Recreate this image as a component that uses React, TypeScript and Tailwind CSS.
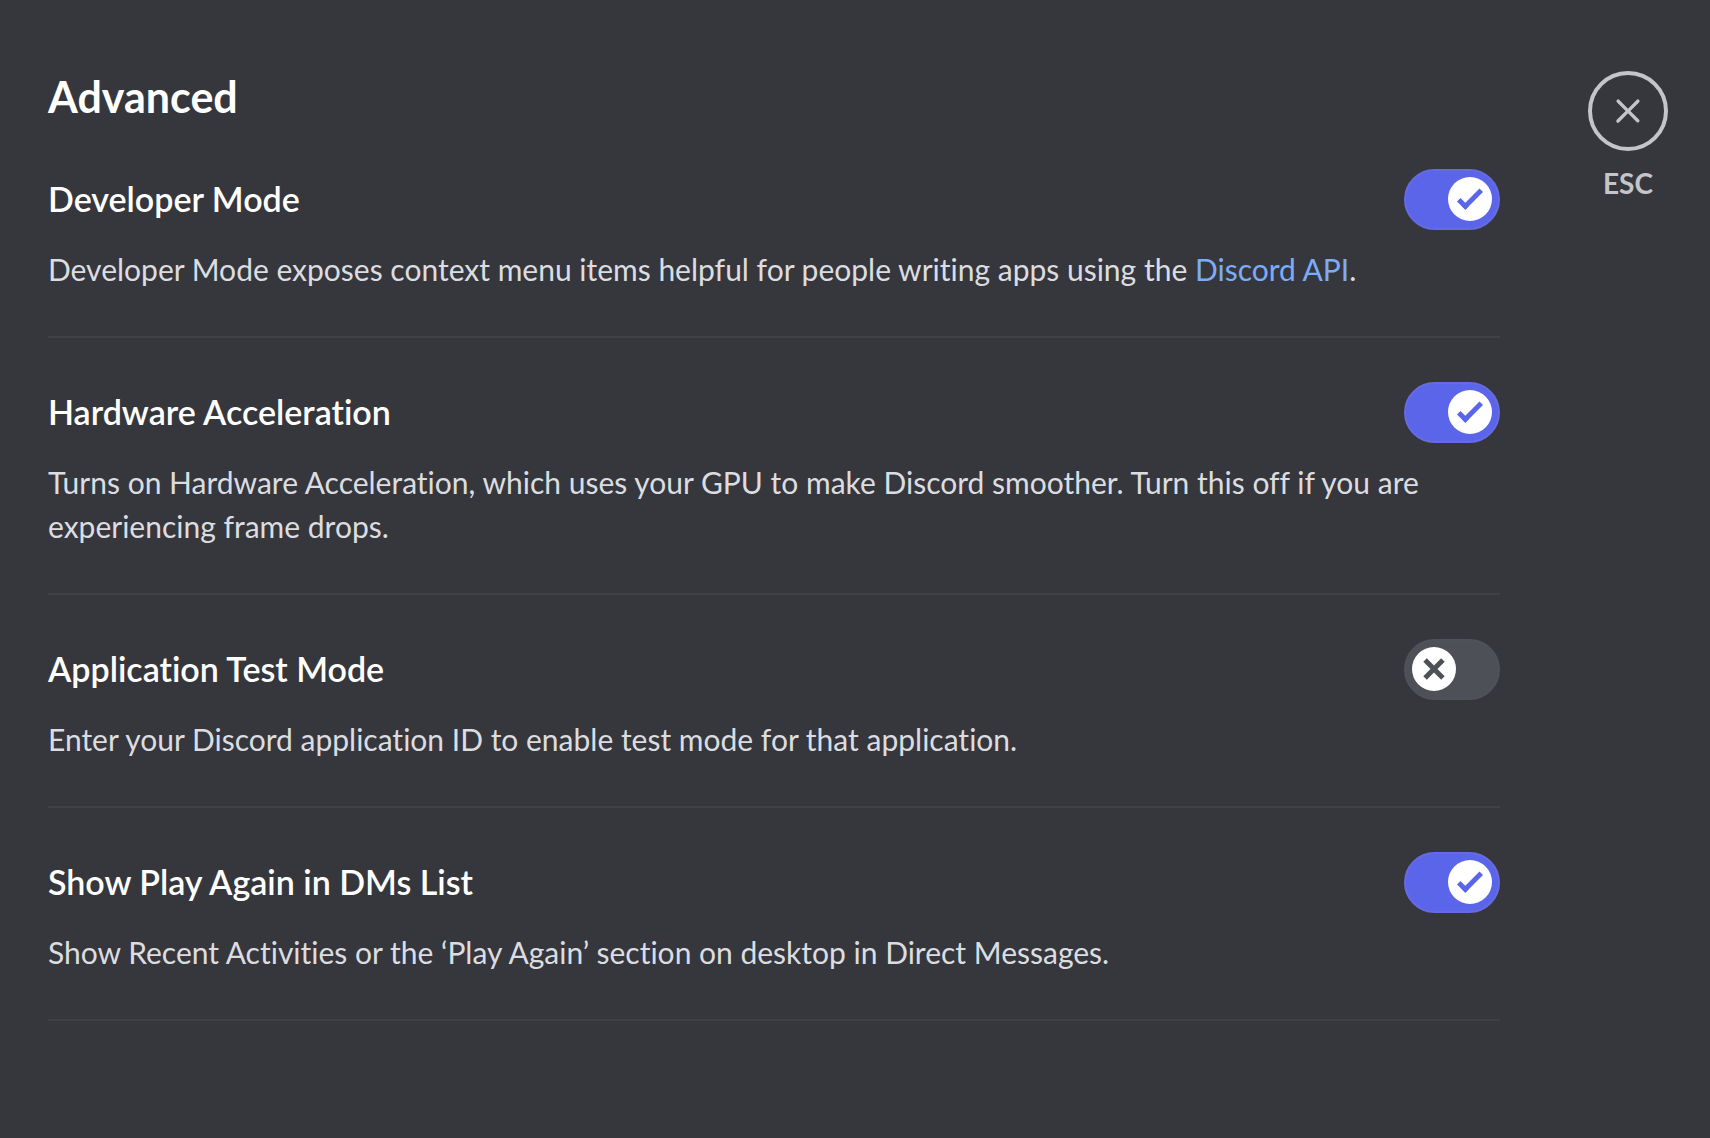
import { useState, type ReactNode } from 'react';

type SettingProps = {
  id: string;
  title: string;
  initial: boolean;
  children: ReactNode;
};

function Switch({ id, checked, onChange }: { id: string; checked: boolean; onChange: (value: boolean) => void }) {
  return (
    <label
      className={
        checked
          ? 'flex h-[61px] w-24 shrink-0 cursor-pointer items-start justify-end rounded-full border-2 border-[#676be3] bg-[#5b65ea] p-1.5'
          : 'flex h-[61px] w-24 shrink-0 cursor-pointer items-start justify-start rounded-full border-2 border-[#505259] bg-[#4e5058] p-1.5'
      }
    >
      <input
        id={id}
        type="checkbox"
        role="switch"
        checked={checked}
        aria-describedby={`${id}-description`}
        onChange={(event) => onChange(event.target.checked)}
        className="sr-only"
      />
      <span className="size-11 rounded-full bg-white">
        <svg viewBox="0 0 20 20" className="size-11" aria-hidden="true">
          {checked ? (
            <g fill="#5b65ea">
              <path d="M7.89561 14.8538L6.30462 13.2629L14.3099 5.25755L15.9009 6.84854L7.89561 14.8538Z" />
              <path d="M4.08643 11.0903L5.67742 9.49929L9.4485 13.2704L7.85751 14.8614L4.08643 11.0903Z" />
            </g>
          ) : (
            <g fill="#4e5058">
              <path d="M5.13231 6.72963L6.7233 5.13864L14.855 13.2704L13.264 14.8614L5.13231 6.72963Z" />
              <path d="M13.2704 5.13231L14.8614 6.7233L6.72963 14.855L5.13864 13.264L13.2704 5.13231Z" />
            </g>
          )}
        </svg>
      </span>
    </label>
  );
}

function Setting({ id, title, initial, children }: SettingProps) {
  const [checked, setChecked] = useState(initial);
  return (
    <section className="mb-11 border-b-2 border-[#404147] pb-[45px]">
      <div className="flex items-start justify-between">
        <label htmlFor={id} className="cursor-pointer text-[34px] leading-[60px] font-semibold text-white">
          {title}
        </label>
        <Switch id={id} checked={checked} onChange={setChecked} />
      </div>
      <p id={`${id}-description`} className="mt-[17px] text-[30px] leading-[44px] text-[#dcdde0]">
        {children}
      </p>
    </section>
  );
}

export default function App() {
  return (
    <div className="flex min-h-screen bg-[#36373c] pr-[42px] pl-12 font-['Lato','Open_Sans',sans-serif] [font-variant-ligatures:none]">
      <main className="min-w-0 flex-1 pt-[69px]">
        <h1 className="mb-11 text-[43px] leading-[56px] font-bold text-white">Advanced</h1>
        <Setting id="developer-mode" title="Developer Mode" initial={true}>
          Developer Mode exposes context menu items helpful for people writing apps using the{' '}
          <a href="#discord-api" className="text-[#7cacf8] hover:underline">
            Discord API
          </a>
          .
        </Setting>
        <Setting id="hardware-acceleration" title="Hardware Acceleration" initial={true}>
          Turns on Hardware Acceleration, which uses your GPU to make Discord smoother. Turn this off if you are
          experiencing frame drops.
        </Setting>
        <Setting id="application-test-mode" title="Application Test Mode" initial={false}>
          Enter your Discord application ID to enable test mode for that application.
        </Setting>
        <Setting id="show-play-again" title="Show Play Again in DMs List" initial={true}>
          Show Recent Activities or the ‘Play Again’ section on desktop in Direct Messages.
        </Setting>
      </main>
      <aside className="ml-[88px] w-20 shrink-0 pt-[71px]">
        <button type="button" className="flex w-20 cursor-pointer flex-col items-center gap-3.5 text-[#c4c5c9]">
          <span className="flex size-20 items-center justify-center rounded-full border-4 border-current">
            <svg viewBox="0 0 24 24" className="size-10" fill="currentColor" aria-hidden="true">
              <path d="M17.3 18.7a1 1 0 0 0 1.4-1.4L13.42 12l5.3-5.3a1 1 0 0 0-1.42-1.4L12 10.58l-5.3-5.3a1 1 0 0 0-1.4 1.42L10.58 12l-5.3 5.3a1 1 0 1 0 1.42 1.4L12 13.42l5.3 5.3Z" />
            </svg>
          </span>
          <span className="text-[28px] leading-9 font-bold">ESC</span>
        </button>
      </aside>
    </div>
  );
}
